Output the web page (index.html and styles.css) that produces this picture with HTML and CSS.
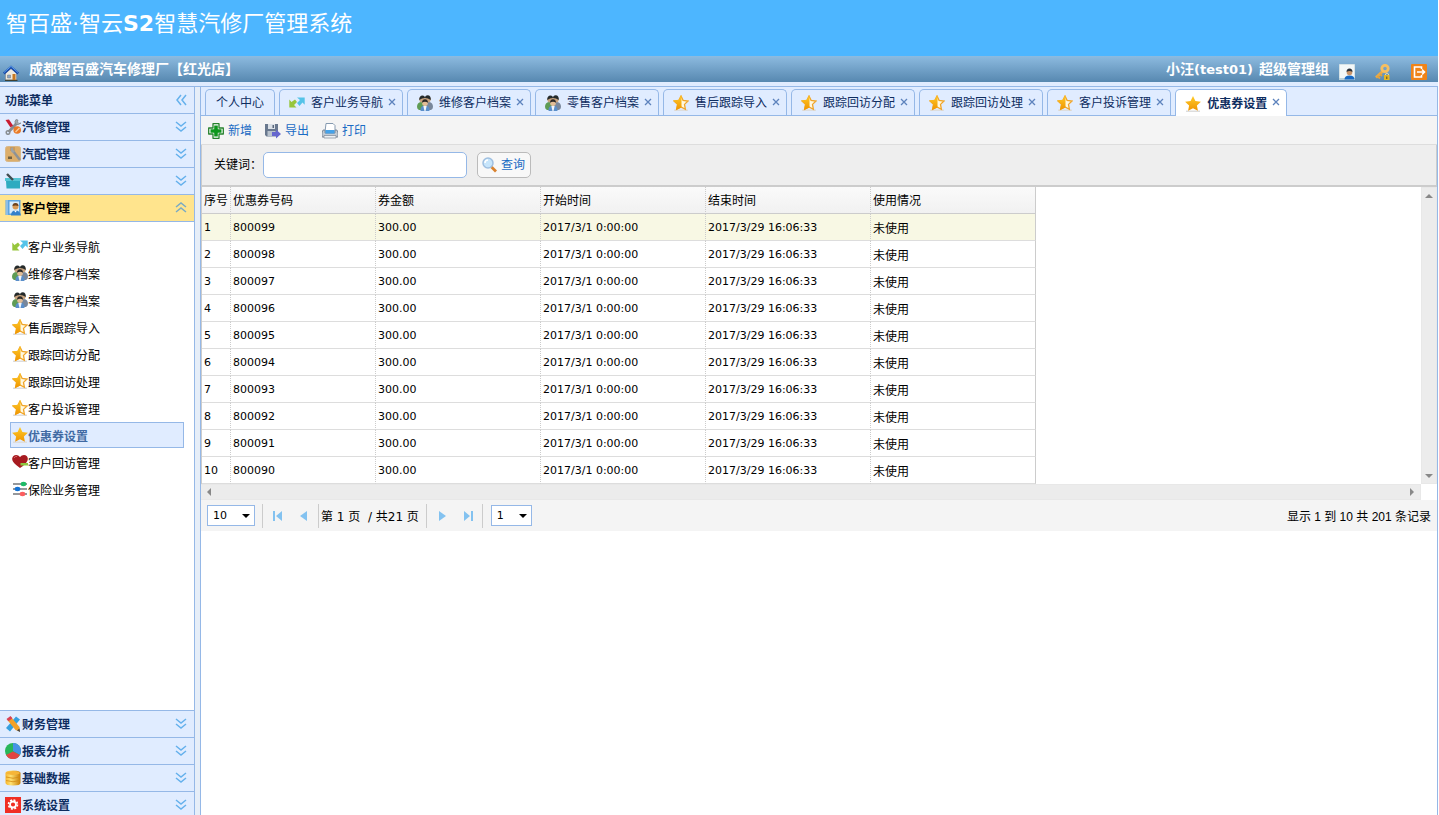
FILE: index.html
```html
<!DOCTYPE html>
<html lang="zh-CN">
<head>
<meta charset="utf-8">
<title>智百盛·智云S2智慧汽修厂管理系统</title>
<link rel="stylesheet" href="styles.css">
</head>
<body>
<svg class="defs" aria-hidden="true">
  <defs>
    <linearGradient id="gold" x1="0" y1="0" x2="0" y2="1"><stop offset="0" stop-color="#ffcc2a"/><stop offset="1" stop-color="#ef9400"/></linearGradient>
    <linearGradient id="coins" x1="0" y1="0" x2="1" y2="0"><stop offset="0" stop-color="#f7b52a"/><stop offset=".35" stop-color="#ffe173"/><stop offset="1" stop-color="#c97d05"/></linearGradient>
  </defs>
  <symbol id="i-home" viewBox="0 0 16 16"><path d="M2.500 8 8 3.500 13.500 8v7h-11z" fill="#eeeadf" stroke="#8d9299" stroke-width=".8"/><path d="M2 14.800h12.500V16H2z" fill="#3f4232"/><path d="M.8 8.500 8 2l7.200 6.500" fill="none" stroke="#1c4da8" stroke-width="2.400"/><path d="M1 7.500 8 1.300 15 7.500" fill="none" stroke="#5a9cf0" stroke-width="1"/><path d="M9.500 9h3v6h-3z" fill="#c8781f"/><path d="M4.500 10h3v3h-3z" fill="#8ba6c8" stroke="#777" stroke-width=".5"/></symbol>
  <symbol id="i-user" viewBox="0 0 16 16"><path d="M.5.500h15v14H.5z" fill="#f2f7f8" stroke="#d5e2e6"/><path d="M0 14h16v2H0z" fill="#b9d0da"/><path d="M5.500 15.500q0-4 5-4t5 4z" fill="#1769c4"/><circle cx="10.500" cy="8.500" r="2.800" fill="#c9956b"/><path d="M7.500 8q0-3.500 3-3.500t3 3.500q-3-2-6 0z" fill="#28303a"/></symbol>
  <symbol id="i-key" viewBox="0 0 16 16"><path d="m8 7-7 6.500" stroke="#e9aa48" stroke-width="2.800"/><path d="m2.500 12 2.500 2.500M5 10l2 2" stroke="#e3a13c" stroke-width="1.800"/><circle cx="10" cy="4.500" r="3.200" fill="none" stroke="#f5bf62" stroke-width="2.800"/><path d="M10.500 11v-1q1.500-2 3 0v1" fill="none" stroke="#e9d8a6"/><path d="M9 11h5.500v5H9z" fill="#e2b526"/><path d="M11.300 12.500h1V15h-1z" fill="#5e4b20"/></symbol>
  <symbol id="i-exit" viewBox="0 0 16 16"><rect width="16" height="16" rx="1" fill="#f08418"/><path d="M10.500 5V3H3.500v10h7v-2" fill="none" stroke="#fff" stroke-width="1.600"/><path d="M6 8h7.500m-2.500-2.500L13.500 8 11 10.500" fill="none" stroke="#fff" stroke-width="1.600"/></symbol>
  <symbol id="i-tools" viewBox="0 0 16 16"><path d="M3.500 13 12 4" stroke="#888d91" stroke-width="2.800"/><path d="M11 .5q-2 2-.5 4.500 2.500 2 5.500-1l-2 .5-1.500-1.500.5-2z" fill="#a2a7ab" stroke="#747a7e" stroke-width=".6"/><circle cx="3" cy="13.500" r="1.800" fill="none" stroke="#898e92" stroke-width="1.500"/><path d="m6 6 6 5" stroke="#888" stroke-width="1.500"/><path d="M.5 1 4 .5l4 6-2.500 2z" fill="#c91c32"/><circle cx="12.200" cy="11" r="3.800" fill="#e97926"/><path d="m10.500 13 4-4" stroke="#f6d0a0" stroke-width="1.200"/></symbol>
  <symbol id="i-part" viewBox="0 0 16 16"><rect x=".5" y=".5" width="15" height="15" rx="2" fill="#dcae6b" stroke="#d8b889"/><path d="M5 1h5v4H5z" fill="#c99a5d"/><path d="m8 5 7 9" stroke="#8e9294" stroke-width="2.500"/><path d="M6 2q-1 4 2 5l2-2-2-1V1.500z" fill="#9da2a5"/><path d="M3 10.500h4v2.500H3z" fill="#6e6043"/></symbol>
  <symbol id="i-basket" viewBox="0 0 16 16"><path d="M0 5h16v3h-1v7.500H1.500L1 8H0z" fill="#2eabc0"/><path d="M0 5h16v3H0z" fill="#54c4d4"/><path d="M2 1 8 7" stroke="#424d51" stroke-width="2.400"/></symbol>
  <symbol id="i-book" viewBox="0 0 16 16"><path d="M.5 0h15v15H.5z" fill="#5da4df"/><path d="M4.500 1.500H14v12H4.500z" fill="#d9edfb"/><path d="M2 .500v14.500" stroke="#dceaf5" stroke-width="1.500" stroke-dasharray="1 1"/><circle cx="10.500" cy="6.500" r="3" fill="#d99b55"/><path d="M7.500 6q0-3 3-3t3 3q-3-1-6 0z" fill="#6d421c"/><path d="M6 15.500q0-5 4.500-5t5.500 5z" fill="#3381cb"/><path d="m9 10.500 1.500 2 1.500-2z" fill="#fff"/></symbol>
  <symbol id="i-arrows" viewBox="0 0 16 16"><path d="M.3 4.500 2.500 7 6 4.500l2 2.500-3 3 2.500 2.500H.3z" fill="#97c63c"/><path d="M8 2.500h7.700v7.300L13.500 7.500l-3 3.500-2.500-3L11 5z" fill="#55c3e8"/></symbol>
  <symbol id="i-people" viewBox="0 0 16 16"><path d="M0 12q0-4.500 4-5h3v8H2q-2-1-2-3z" fill="#5f9c55"/><path d="M9 7h3q4 .5 4 5 0 2-2 3H9z" fill="#79879b"/><circle cx="5.200" cy="4.500" r="2.900" fill="#c7a17c"/><circle cx="10.800" cy="4.500" r="2.900" fill="#c7a17c"/><path d="M2.200 5q0-4.500 3.300-4.500Q8 .5 8 3 5 3 2.200 5zM8 3q0-2.700 2.700-2.700 3.300 0 3.100 4.700Q11 3 8 3z" fill="#252a2a"/><path d="M3.500 16q-.5-5.500 4.500-5.500t4.500 5.500z" fill="#5b8fca"/><path d="M6.300 11h3.400L8.500 16h-1z" fill="#f2f5f9"/><circle cx="8" cy="8" r="2.900" fill="#e3bd96"/><path d="M5 7.800Q5 4.300 8 4.300t3 3.500Q8 5.800 5 7.800z" fill="#2c2a28"/></symbol>
  <symbol id="i-half" viewBox="0 0 16 16"><path d="M1 14.500h14V16H1z" fill="#ddd"/><path d="m8 1 2.100 4.300 4.900.7-3.500 3.400.9 4.900L8 12l-4.400 2.300.9-4.900L1 6l4.900-.7z" fill="#fff8df" stroke="#f0a52a" stroke-width="1.300"/><path d="M8.500 0V12.500l-5.500 2.500 1.200-5.700L.2 5.600l5.600-.8z" fill="url(#gold)"/></symbol>
  <symbol id="i-star" viewBox="0 0 16 16"><path d="M1 14.500h14V16H1z" fill="#ddd"/><path d="m8 0 2.400 4.900 5.500.8-4 3.800 1 5.300L8 12.300l-4.900 2.500 1-5.300-4-3.800 5.500-.8z" fill="url(#gold)"/></symbol>
  <symbol id="i-heart" viewBox="0 0 16 16"><path d="M8 14Q-.5 8.500.2 4.500.8 1 4.200 1 6.500 1 8 3q1.500-2 4-2 3.400 0 3.800 3.500Q16.300 8.500 8 14z" fill="#a71b20"/><path d="M2 4q1-2 3-1.500" fill="none" stroke="#d56165"/><path d="M8.500 9H16v2.500H8.500z" fill="#8cc63f"/></symbol>
  <symbol id="i-sliders" viewBox="0 0 16 16"><path d="M1 3h14M1 8h14M1 13h14" stroke="#73777b" stroke-width="1.500"/><ellipse cx="11.500" cy="3" rx="2.800" ry="2.200" fill="#1dbb67"/><ellipse cx="5.500" cy="8" rx="2.800" ry="2.200" fill="#1373d6"/><ellipse cx="10.500" cy="13" rx="2.800" ry="2.200" fill="#fb5e60"/></symbol>
  <symbol id="i-pencils" viewBox="0 0 16 16"><path d="M1 12 11 .5l4 3L5 15.500z" fill="#35a0df"/><path d="M2 3.500 6 1l8.500 10 .5 4.500-4.500-1.500z" fill="#f3a126"/><path d="M1.500 3 5.500 0l2 2.300-4 3z" fill="#d94255"/><path d="m12 14.500 2.500-2 .5 3.500z" fill="#444"/></symbol>
  <symbol id="i-pie" viewBox="0 0 16 16"><circle cx="8" cy="8" r="8" fill="#28b659"/><path d="M8 0a8 8 0 0 1 7 12L8 8z" fill="#4593e6"/><path d="M8 8.500 15 12A8 8 0 0 1 1 12z" fill="#e34444"/></symbol>
  <symbol id="i-db" viewBox="0 0 16 16"><path d="M.5 3q0-2.500 7.500-2.500T15.500 3v10q0 2.500-7.500 2.500T.5 13z" fill="url(#coins)"/><ellipse cx="8" cy="3" rx="6.800" ry="1.900" fill="#f6b538"/><path d="M1 7q7 2.500 14 0M1 10.500q7 2.500 14 0" fill="none" stroke="#d48c14" stroke-width=".8"/></symbol>
  <symbol id="i-gear" viewBox="0 0 16 16"><path d="M0 0h16v16H0z" fill="#f02e24"/><circle cx="8" cy="7.500" r="4.500" fill="none" stroke="#fff" stroke-width="1.600" stroke-dasharray="2 1.530"/><circle cx="8" cy="7.500" r="3" fill="none" stroke="#fff" stroke-width="1.800"/></symbol>
  <symbol id="i-add" viewBox="0 0 16 16"><path d="M5 .7h6V5h4.300v6H11v4.300H5V11H.7V5H5z" fill="#fff" stroke="#26812c" stroke-width="1.300" stroke-linejoin="round"/><path d="M6.200 2.500h3.600v3.700h3.700v3.600H9.800v3.700H6.200V9.800H2.500V6.200h3.700z" fill="#0c961b"/></symbol>
  <symbol id="i-save" viewBox="0 0 16 16"><path d="M0 1h13v12.500H1.500L0 12z" fill="#69788e"/><path d="M3 1h7v5H3z" fill="#dce1e7"/><path d="M7.500 2h1.500v3H7.500z" fill="#58667a"/><path d="M2.500 8h8v5.500h-8z" fill="#b9c2cd"/><path d="M7 9h4V6.500l5 4.500-5 4.500V13H7z" fill="#6566ce"/></symbol>
  <symbol id="i-print" viewBox="0 0 16 16"><path d="M4 .5h7l2 2V9H3z" fill="#fff" stroke="#859ab0"/><path d="M1 7h2v3h10V7h2l1 3v4H0v-4z" fill="#c4ccd5" stroke="#6c7a8a" stroke-width=".8"/><path d="M3.500 7h9v3.500h-9z" fill="#45a2e9"/><path d="M2 12.500h12V15H2z" fill="#eef1f4" stroke="#7c8896" stroke-width=".7"/></symbol>
  <symbol id="i-search" viewBox="0 0 16 16"><path d="m9.500 10 4.500 4.500" stroke="#d9822f" stroke-width="2.800"/><circle cx="6" cy="6" r="5" fill="#c7e5fb" stroke="#9fbfe0" stroke-width="1.500"/><path d="M3 6q0-3 3-3" fill="none" stroke="#fff" stroke-width="1.500"/></symbol>
  <symbol id="i-down" viewBox="0 0 12 12"><path d="m1 1 5 4 5-4M1 6l5 4 5-4" fill="none" stroke="#65b1ec" stroke-width="1.500"/></symbol>
  <symbol id="i-up" viewBox="0 0 12 12"><path d="m1 5 5-4 5 4M1 10l5-4 5 4" fill="none" stroke="#79aac4" stroke-width="1.500"/></symbol>
  <symbol id="i-left" viewBox="0 0 12 12"><path d="M6 1 2 6l4 5M11 1 7 6l4 5" fill="none" stroke="#65b1ec" stroke-width="1.500"/></symbol>
  <symbol id="i-close" viewBox="0 0 8 8"><path d="m1 1 6 6M7 1 1 7" stroke="#5d83bd" stroke-width="1.300"/></symbol>
  <symbol id="i-prev" viewBox="0 0 12 12"><path d="M9 1v10L2 6z" fill="#83c2f0"/></symbol>
  <symbol id="i-first" viewBox="0 0 12 12"><path d="M1 1h2v10H1zM10 1v10L4 6z" fill="#83c2f0"/></symbol>
</svg>

<header class="banner"><h1>智百盛·智云<b>S2</b>智慧汽修厂管理系统</h1></header>
<div class="userbar">
  <svg class="icon home"><use href="#i-home"/></svg>
  <strong class="shop">成都智百盛汽车修理厂【红光店】</strong>
  <strong class="account">小汪<span class="latin">(test01)</span></strong>
  <strong class="role">超级管理组</strong>
  <div class="quick">
    <button aria-label="用户"><svg class="icon"><use href="#i-user"/></svg></button>
    <button aria-label="密码"><svg class="icon"><use href="#i-key"/></svg></button>
    <button aria-label="退出"><svg class="icon"><use href="#i-exit"/></svg></button>
  </div>
</div>

<div class="workspace">
  <aside class="sidebar">
    <button class="section title"><span>功能菜单</span><svg class="chevron"><use href="#i-left"/></svg></button>
    <button class="section"><svg class="icon"><use href="#i-tools"/></svg><span>汽修管理</span><svg class="chevron"><use href="#i-down"/></svg></button>
    <button class="section"><svg class="icon"><use href="#i-part"/></svg><span>汽配管理</span><svg class="chevron"><use href="#i-down"/></svg></button>
    <button class="section"><svg class="icon"><use href="#i-basket"/></svg><span>库存管理</span><svg class="chevron"><use href="#i-down"/></svg></button>
    <button class="section open"><svg class="icon"><use href="#i-book"/></svg><span>客户管理</span><svg class="chevron"><use href="#i-up"/></svg></button>
    <nav class="menu">
      <a href="#"><svg class="icon"><use href="#i-arrows"/></svg><span>客户业务导航</span></a>
      <a href="#"><svg class="icon"><use href="#i-people"/></svg><span>维修客户档案</span></a>
      <a href="#"><svg class="icon"><use href="#i-people"/></svg><span>零售客户档案</span></a>
      <a href="#"><svg class="icon"><use href="#i-half"/></svg><span>售后跟踪导入</span></a>
      <a href="#"><svg class="icon"><use href="#i-half"/></svg><span>跟踪回访分配</span></a>
      <a href="#"><svg class="icon"><use href="#i-half"/></svg><span>跟踪回访处理</span></a>
      <a href="#"><svg class="icon"><use href="#i-half"/></svg><span>客户投诉管理</span></a>
      <a href="#" class="current"><svg class="icon"><use href="#i-star"/></svg><span>优惠券设置</span></a>
      <a href="#"><svg class="icon"><use href="#i-heart"/></svg><span>客户回访管理</span></a>
      <a href="#"><svg class="icon"><use href="#i-sliders"/></svg><span>保险业务管理</span></a>
    </nav>
    <button class="section below"><svg class="icon"><use href="#i-pencils"/></svg><span>财务管理</span><svg class="chevron"><use href="#i-down"/></svg></button>
    <button class="section below"><svg class="icon"><use href="#i-pie"/></svg><span>报表分析</span><svg class="chevron"><use href="#i-down"/></svg></button>
    <button class="section below"><svg class="icon"><use href="#i-db"/></svg><span>基础数据</span><svg class="chevron"><use href="#i-down"/></svg></button>
    <button class="section below"><svg class="icon"><use href="#i-gear"/></svg><span>系统设置</span><svg class="chevron"><use href="#i-down"/></svg></button>
  </aside>

  <main class="content">
    <nav class="tabs">
      <div class="tab"><a href="#">个人中心</a></div>
      <div class="tab"><a href="#"><svg class="icon"><use href="#i-arrows"/></svg>客户业务导航</a><button aria-label="关闭"><svg><use href="#i-close"/></svg></button></div>
      <div class="tab"><a href="#"><svg class="icon"><use href="#i-people"/></svg>维修客户档案</a><button aria-label="关闭"><svg><use href="#i-close"/></svg></button></div>
      <div class="tab"><a href="#"><svg class="icon"><use href="#i-people"/></svg>零售客户档案</a><button aria-label="关闭"><svg><use href="#i-close"/></svg></button></div>
      <div class="tab"><a href="#"><svg class="icon"><use href="#i-half"/></svg>售后跟踪导入</a><button aria-label="关闭"><svg><use href="#i-close"/></svg></button></div>
      <div class="tab"><a href="#"><svg class="icon"><use href="#i-half"/></svg>跟踪回访分配</a><button aria-label="关闭"><svg><use href="#i-close"/></svg></button></div>
      <div class="tab"><a href="#"><svg class="icon"><use href="#i-half"/></svg>跟踪回访处理</a><button aria-label="关闭"><svg><use href="#i-close"/></svg></button></div>
      <div class="tab"><a href="#"><svg class="icon"><use href="#i-half"/></svg>客户投诉管理</a><button aria-label="关闭"><svg><use href="#i-close"/></svg></button></div>
      <div class="tab active"><a href="#"><svg class="icon"><use href="#i-star"/></svg>优惠券设置</a><button aria-label="关闭"><svg><use href="#i-close"/></svg></button></div>
    </nav>
    <div class="toolbar">
      <button><svg class="icon"><use href="#i-add"/></svg>新增</button>
      <button><svg class="icon"><use href="#i-save"/></svg>导出</button>
      <button><svg class="icon"><use href="#i-print"/></svg>打印</button>
    </div>
    <form class="search">
      <label for="keyword">关键词：</label>
      <input id="keyword" type="text">
      <button type="button"><svg class="icon"><use href="#i-search"/></svg>查询</button>
    </form>
    <div class="viewport">
      <div class="sheet">
        <table>
          <colgroup><col class="c-no"><col class="c-code"><col span="4" class="c-wide"></colgroup>
          <thead><tr><th>序号</th><th>优惠券号码</th><th>券金额</th><th>开始时间</th><th>结束时间</th><th>使用情况</th></tr></thead>
          <tbody>
            <tr class="hover"><td>1</td><td>800099</td><td>300.00</td><td>2017/3/1 0:00:00</td><td>2017/3/29 16:06:33</td><td class="state">未使用</td></tr>
            <tr><td>2</td><td>800098</td><td>300.00</td><td>2017/3/1 0:00:00</td><td>2017/3/29 16:06:33</td><td class="state">未使用</td></tr>
            <tr><td>3</td><td>800097</td><td>300.00</td><td>2017/3/1 0:00:00</td><td>2017/3/29 16:06:33</td><td class="state">未使用</td></tr>
            <tr><td>4</td><td>800096</td><td>300.00</td><td>2017/3/1 0:00:00</td><td>2017/3/29 16:06:33</td><td class="state">未使用</td></tr>
            <tr><td>5</td><td>800095</td><td>300.00</td><td>2017/3/1 0:00:00</td><td>2017/3/29 16:06:33</td><td class="state">未使用</td></tr>
            <tr><td>6</td><td>800094</td><td>300.00</td><td>2017/3/1 0:00:00</td><td>2017/3/29 16:06:33</td><td class="state">未使用</td></tr>
            <tr><td>7</td><td>800093</td><td>300.00</td><td>2017/3/1 0:00:00</td><td>2017/3/29 16:06:33</td><td class="state">未使用</td></tr>
            <tr><td>8</td><td>800092</td><td>300.00</td><td>2017/3/1 0:00:00</td><td>2017/3/29 16:06:33</td><td class="state">未使用</td></tr>
            <tr><td>9</td><td>800091</td><td>300.00</td><td>2017/3/1 0:00:00</td><td>2017/3/29 16:06:33</td><td class="state">未使用</td></tr>
            <tr><td>10</td><td>800090</td><td>300.00</td><td>2017/3/1 0:00:00</td><td>2017/3/29 16:06:33</td><td class="state">未使用</td></tr>
          </tbody>
        </table>
      </div>
      <div class="bar vertical"><i class="arrow up"></i><i class="arrow down"></i></div>
      <div class="bar horizontal"><i class="arrow left"></i><i class="arrow right"></i></div>
    </div>
    <div class="pager">
      <span class="picker size"><select aria-label="每页条数"><option>10</option></select></span>
      <span class="group">
        <button aria-label="首页"><svg><use href="#i-first"/></svg></button>
        <button aria-label="上一页"><svg><use href="#i-prev"/></svg></button>
      </span>
      <span class="position">第 1 页 &nbsp;/ 共21 页</span>
      <span class="group flip">
        <button aria-label="下一页"><svg><use href="#i-prev"/></svg></button>
        <button aria-label="末页"><svg><use href="#i-first"/></svg></button>
      </span>
      <span class="picker page"><select aria-label="页码"><option>1</option></select></span>
      <span class="total">显示 1 到 10 共 201 条记录</span>
    </div>
  </main>
</div>
</body>
</html>
```

FILE: styles.css
```css
* { box-sizing: border-box; }

html { height: 100%; background: #fff; }

body {
  height: 100%;
  margin: 0;
  padding-right: 1px;
  display: flex;
  flex-direction: column;
  overflow: hidden;
  font: 12px/18px "Liberation Sans", "Noto Sans CJK SC", sans-serif;
  color: #000;
}

button {
  margin: 0;
  padding: 0;
  border: 0;
  background: none;
  font: inherit;
  color: inherit;
  cursor: pointer;
}

a { color: inherit; text-decoration: none; }
svg { display: block; flex: none; }
.defs { position: absolute; width: 0; height: 0; }
.icon { width: 16px; height: 16px; }
.latin { font-family: "DejaVu Sans", sans-serif; }

.banner {
  flex: none;
  height: 56px;
  padding: 8px 6px;
  background: #4db6ff;
  color: #fff;
}

.banner h1 {
  margin: 0;
  font: 22px/32px "DejaVu Sans", "Noto Sans CJK SC", sans-serif;
}

.userbar {
  flex: none;
  display: flex;
  align-items: center;
  height: 26px;
  padding: 0 11px 0 3px;
  background: linear-gradient(#8dbbe0, #5788b0);
  color: #fff;
  font-size: 14px;
}

.home { margin-top: 8px; }
.shop { flex: 1; padding-left: 10px; }
.account .latin { font-size: 13px; }
.role { padding-left: 6px; }
.quick { display: flex; gap: 20px; padding: 6px 0 0 10px; }

.workspace {
  flex: 1;
  min-height: 0;
  display: flex;
  gap: 5px;
  margin-top: 4px;
  border-top: 1px solid #95b8e7;
  background: #e6eef8;
  box-shadow: 0 -4px #e0ecff;
}

.sidebar {
  flex: none;
  display: flex;
  flex-direction: column;
  width: 195px;
  margin-bottom: -3px;
  border-right: 1px solid #95b8e7;
  background: #fff;
}

.section {
  flex: none;
  display: flex;
  align-items: center;
  height: 27px;
  padding: 0 7px 0 5px;
  border-bottom: 1px solid #95b8e7;
  background: #e0ecff;
  color: #0e2d5f;
  font-weight: bold;
  text-align: left;
}

.section span { flex: 1; padding: 2px 0 0 1px; }
.section.title span { padding-left: 0; }
.section.open { background: #ffe48d; color: #000; }
.section.below { border-top: 1px solid #95b8e7; border-bottom: 0; }
.chevron { width: 12px; height: 12px; }

.menu {
  flex: 1;
  display: flex;
  flex-direction: column;
  gap: 1px;
  padding: 11px 10px;
}

.menu a {
  display: flex;
  align-items: center;
  height: 26px;
  padding: 0 1px;
  border: 1px solid transparent;
}

.menu span { padding-top: 3px; }

.menu .current {
  border-color: #95b8e7;
  background: #e0ecff;
  color: #416aa3;
  font-weight: bold;
}

.content {
  flex: 1;
  min-width: 0;
  border: solid #95b8e7;
  border-width: 0 1px;
  background: #fff;
}

.tabs {
  display: flex;
  gap: 4px;
  padding: 2px 4px 0;
  border-bottom: 1px solid #95b8e7;
  background: #e0ecff;
}

.tab {
  display: flex;
  gap: 5px;
  height: 26px;
  padding: 1px 6px 0 9px;
  border: 1px solid #95b8e7;
  border-bottom: 0;
  border-radius: 5px 5px 0 0;
  color: #0e2d5f;
}

.tab:first-child { padding: 1px 10px 0; }
.tab a { display: flex; align-items: center; gap: 6px; }
.tab button { width: 8px; height: 8px; margin-top: 7px; }
.tab button svg { width: 8px; height: 8px; }

.tab.active {
  height: 27px;
  margin-bottom: -1px;
  background: #fff;
  font-weight: bold;
}

.toolbar {
  display: flex;
  gap: 13px;
  height: 29px;
  padding: 1px 7px 0;
  border-bottom: 1px solid #ddd;
  background: #f4f4f4;
  color: #1a6bc4;
}

.toolbar button { display: flex; align-items: center; gap: 4px; }

.search {
  display: flex;
  align-items: center;
  height: 42px;
  padding: 0 12px;
  border: solid #ccc;
  border-width: 0 1px 2px;
  background: #eee;
}

.search label { width: 49px; white-space: nowrap; }

.search input {
  width: 204px;
  height: 26px;
  padding: 0 4px;
  border: 1px solid #95b8e7;
  border-radius: 5px;
  background: #fff;
  font: inherit;
}

.search button {
  display: flex;
  align-items: center;
  gap: 3px;
  height: 26px;
  margin-left: 10px;
  padding: 0 5px 0 4px;
  border: 1px solid #bbb;
  border-radius: 5px;
  background: #f8f8f8;
  color: #1a6bc4;
}

.viewport {
  display: grid;
  grid-template-columns: 1fr 16px;
  grid-template-rows: auto 16px;
}

.sheet { overflow: hidden; border-left: 1px solid #ccc; }

table {
  width: 834px;
  table-layout: fixed;
  border-collapse: separate;
  border-spacing: 0;
}

.c-no { width: 29px; }
.c-code { width: 145px; }
.c-wide { width: 165px; }

th, td {
  height: 27px;
  padding: 2px 2px 0;
  border-right: 1px dotted #ccc;
  border-bottom: 1px solid #ddd;
  text-align: left;
  font-weight: normal;
  white-space: nowrap;
}

th { border-bottom-color: #ccc; background: linear-gradient(#fafafa, #f1f1f1); }
td { font-family: "DejaVu Sans", sans-serif; font-size: 11px; }
th:last-child, td:last-child { border-right: 1px solid #ccc; }
td.state { font: 12px/18px "Noto Sans CJK SC", sans-serif; }
.hover td { background: #f8f8e4; }

.bar {
  display: flex;
  justify-content: space-between;
  align-items: center;
  border: 1px solid #e8e8e8;
  background: #ececec;
}

.vertical { flex-direction: column; padding: 6px 0 5px; }
.horizontal { padding: 0 6px; border-left: 0; }

.arrow { border: 4px solid transparent; }
.arrow.up { border-top: 0; border-bottom-color: #888; }
.arrow.down { border-bottom: 0; border-top-color: #888; }
.arrow.left { border-left: 0; border-right-color: #888; }
.arrow.right { border-right: 0; border-left-color: #888; }

.pager {
  display: flex;
  align-items: center;
  height: 31px;
  padding: 0 6px;
  background: #f4f4f4;
}

.picker { position: relative; height: 21px; }
.picker::after {
  content: "";
  position: absolute;
  top: 9px;
  right: 5px;
  border: 4px solid transparent;
  border-top-color: #000;
  border-bottom: 0;
  pointer-events: none;
}
.picker select {
  appearance: none;
  width: 100%;
  height: 21px;
  padding: 0 5px;
  border: 1px solid #95b8e7;
  border-radius: 0;
  background: #fff;
  font: 11px/18px "DejaVu Sans", sans-serif;
  color: #000;
}
.size { width: 48px; }
.page { width: 41px; margin-left: 8px; }

.group {
  display: flex;
  align-items: center;
  gap: 14px;
  height: 24px;
  margin-left: 7px;
  padding: 0 8px 0 9px;
  border: solid #ccc;
  border-width: 0 1px;
}
.group svg { width: 12px; height: 12px; }
.flip svg { transform: scaleX(-1); }
.position {
  padding: 2px 0 0 2px;
  font-family: "DejaVu Sans", "Noto Sans CJK SC", sans-serif;
}
.total { margin-left: auto; padding-top: 2px; }
```
